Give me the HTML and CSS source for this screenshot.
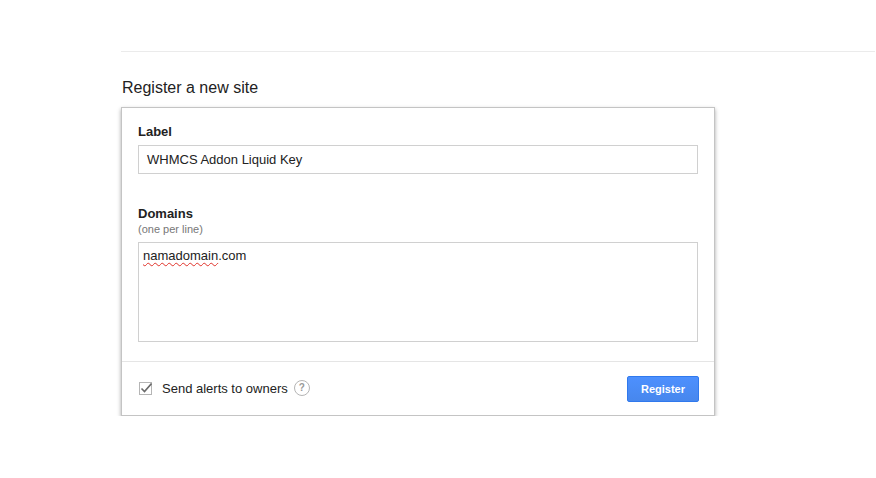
FILE: index.html
```html
<!DOCTYPE html>
<html>
<head>
<meta charset="utf-8">
<link rel="stylesheet" href="styles.css">
</head>
<body>
<div class="page">
  <div class="rule"></div>
  <h1 class="title">Register a new site</h1>
  <div class="card">
    <div class="card-body">
      <div class="field-label">Label</div>
      <div class="input">WHMCS Addon Liquid Key</div>
      <div class="field-label domains">Domains</div>
      <div class="hint">(one per line)</div>
      <div class="textarea"><span class="misspelled">namadomain</span>.com</div>
    </div>
    <div class="card-footer">
      <div class="alerts">
        <span class="checkbox">
          <svg width="13" height="13" viewBox="0 0 13 13"><rect x="0.5" y="0.5" width="12" height="12" fill="#fff" stroke="#b5b5b5"/><path d="M2.5 6.5 L5.5 9.5 L12.5 1.5" fill="none" stroke="#6a6a6a" stroke-width="1.6"/></svg>
        </span>
        <span class="alerts-text">Send alerts to owners</span>
        <span class="help">?</span>
      </div>
      <div class="button">Register</div>
    </div>
  </div>
</div>
</body>
</html>
```
FILE: styles.css
```css
html, body {
  margin: 0;
  padding: 0;
  background: #fff;
}
body {
  font-family: "Liberation Sans", Arial, sans-serif;
  color: #222;
}
.page {
  padding: 51px 0 0 121px;
}
.rule {
  height: 1px;
  background: #ebebeb;
  margin-right: 1px;
}
.title {
  font-size: 16px;
  font-weight: normal;
  margin: 26px 0 0 1px;
  line-height: 19px;
  color: #222;
}
.card {
  width: 592px;
  margin-top: 10px;
  border: 1px solid #c4c4c4;
  box-shadow: 0 2px 4px rgba(0,0,0,0.35);
  background: #fff;
}
.card-body {
  padding: 16px 16px 19px 16px;
}
.field-label {
  font-size: 13px;
  font-weight: bold;
  line-height: 16px;
  color: #222;
}
.input {
  margin-top: 5px;
  height: 27px;
  border: 1px solid #d0d0d0;
  font-size: 13px;
  line-height: 27px;
  padding-left: 8px;
  color: #222;
}
.domains {
  margin-top: 32px;
}
.hint {
  font-size: 11px;
  color: #777;
  line-height: 13px;
  margin-top: 1px;
}
.textarea {
  margin-top: 6px;
  border: 1px solid #d0d0d0;
  font-size: 13px;
  line-height: 16px;
  padding: 5px 4px 0 4px;
  box-sizing: border-box;
  height: 100px;
  color: #222;
}
.misspelled {
  text-decoration: underline wavy #e0322a;
  text-decoration-thickness: 1px;
  text-underline-offset: 2px;
}
.card-footer {
  border-top: 1px solid #e5e5e5;
  height: 53px;
  display: flex;
  align-items: center;
  justify-content: space-between;
  padding: 0 15px 0 17px;
}
.alerts {
  display: flex;
  align-items: center;
  font-size: 13px;
  margin-top: -1px;
}
.checkbox {
  display: flex;
  width: 13px;
  height: 13px;
  margin-top: 1px;
}
.alerts-text {
  margin-left: 10px;
}
.help {
  margin-left: 6px;
  width: 14px;
  height: 14px;
  border: 1px solid #b5b5b5;
  border-radius: 50%;
  font-size: 10px;
  font-weight: bold;
  color: #999;
  display: flex;
  align-items: center;
  justify-content: center;
  line-height: 1;
}
.button {
  width: 72px;
  height: 26px;
  box-sizing: border-box;
  border: 1px solid #3079ed;
  border-radius: 2px;
  background: linear-gradient(#4d90fe, #4787ed);
  color: #fff;
  font-size: 11px;
  font-weight: bold;
  display: flex;
  align-items: center;
  justify-content: center;
}
```
